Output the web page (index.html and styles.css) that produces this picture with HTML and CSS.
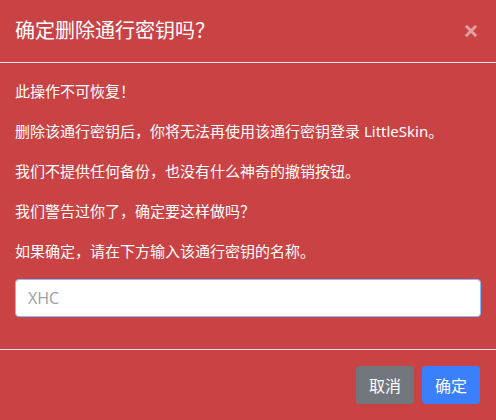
FILE: index.html
```html
<!DOCTYPE html>
<html lang="zh-CN">
<head>
  <meta charset="UTF-8" />
  <meta name="viewport" content="width=device-width, initial-scale=1" />
  <title>确定删除通行密钥吗？</title>
  <link rel="stylesheet" href="styles.css">
</head>
<body>

<div class="modal-content" role="dialog" aria-labelledby="modalTitle">
  <div class="modal-header">
    <h4 class="modal-title" id="modalTitle">确定删除通行密钥吗？</h4>
    <button type="button" class="close" aria-label="关闭">&times;</button>
  </div>
  <div class="modal-body">
    <p>此操作不可恢复！</p>
    <p>删除该通行密钥后，你将无法再使用该通行密钥登录 LittleSkin。</p>
    <p>我们不提供任何备份，也没有什么神奇的撤销按钮。</p>
    <p>我们警告过你了，确定要这样做吗？</p>
    <p>如果确定，请在下方输入该通行密钥的名称。</p>
    <div class="form-group">
      <input type="text" class="form-control" placeholder="XHC" />
    </div>
  </div>
  <div class="modal-footer">
    <button type="button" class="btn btn-secondary">取消</button>
    <button type="button" class="btn btn-primary">确定</button>
  </div>
</div>

</body>
</html>
```

FILE: styles.css
```css
body {
  margin: 0;
  font-family: "Noto Sans", "Noto Sans CJK SC", sans-serif;
  background: #c94345;
  color: #fff;
}
.modal-content {
  background: #c94345;
  min-height: 420px;
}
.modal-header {
  display: flex;
  align-items: center;
  justify-content: space-between;
  padding: 16px 15px;
  border-bottom: 1px solid rgba(255,255,255,0.85);
}
.modal-title {
  margin: 0;
  font-size: 20px;
  font-weight: 400;
  line-height: 30px;
}
.close {
  background: none;
  border: none;
  padding: 0 3px;
  font-family: "Liberation Sans", sans-serif;
  font-size: 24px;
  font-weight: 700;
  line-height: 1;
  color: #fff;
  opacity: 0.5;
  cursor: pointer;
}
.modal-body {
  padding: 16px 15px;
}
.modal-body p {
  margin: 0 0 16px;
  font-size: 15px;
  line-height: 24px;
}
.form-group {
  margin-bottom: 16px;
}
.form-control {
  display: block;
  box-sizing: border-box;
  width: 100%;
  height: 38px;
  padding: 6px 12px;
  font-family: "Open Sans", "Noto Sans CJK SC", sans-serif;
  font-size: 16px;
  color: #495057;
  background: #fff;
  border: 1px solid #80bdff;
  border-radius: 4px;
  outline: none;
}
.form-control::placeholder {
  color: #9aa0a6;
}
.modal-footer {
  display: flex;
  justify-content: flex-end;
  padding: 12px;
  border-top: 1px solid rgba(255,255,255,0.85);
}
.btn {
  margin: 4px;
  height: 38px;
  padding: 6px 12px;
  font-family: "Noto Sans CJK SC", sans-serif;
  font-size: 16px;
  line-height: 24px;
  color: #fff;
  border: 1px solid transparent;
  border-radius: 4px;
  cursor: pointer;
}
.btn-secondary {
  background: #72777e;
}
.btn-primary {
  background: #3a80fd;
}
```
